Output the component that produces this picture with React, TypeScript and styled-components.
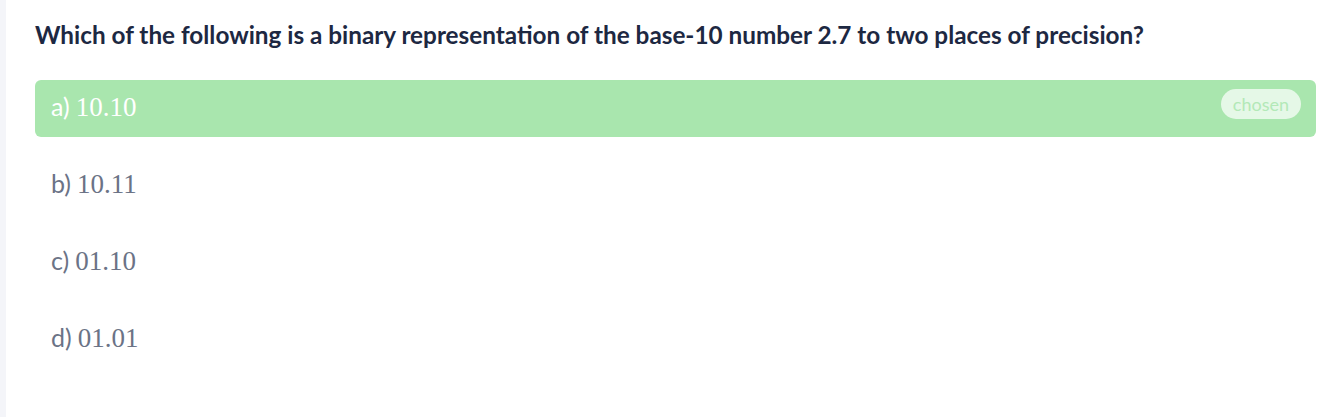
import React from "react";
import styled, { createGlobalStyle } from "styled-components";

const Global = createGlobalStyle`
  html, body { margin: 0; padding: 0; background: #ffffff; }
  body { font-family: "Lato", "Open Sans", sans-serif; }
`;

const Page = styled.div`
  display: flex;
  min-height: 417px;
`;

const SideStrip = styled.div`
  width: 6px;
  flex: none;
  background: #f4f5f9;
`;

const Main = styled.div`
  flex: 1;
  padding: 18px 18px 0 29px;
`;

const Question = styled.h1`
  margin: 0 0 28px 0;
  font-family: "Lato", sans-serif;
  font-weight: 700;
  font-size: 24.3px;
  line-height: 34px;
  color: #1d2842;
`;

const Options = styled.div`
  display: flex;
  flex-direction: column;
  gap: 20px;
`;

const Option = styled.div<{ $chosen?: boolean }>`
  display: flex;
  align-items: center;
  justify-content: space-between;
  height: 57px;
  box-sizing: border-box;
  padding: 0 15px 3px 16px;
  border-radius: 6px;
  background: ${(p) => (p.$chosen ? "#a9e6ae" : "transparent")};
  color: ${(p) => (p.$chosen ? "#ffffff" : "#6b7386")};
`;

const OptionText = styled.div`
  display: flex;
  align-items: baseline;
  gap: 6px;
`;

const Letter = styled.span`
  font-family: "Lato", sans-serif;
  font-size: 25px;
`;

const Value = styled.span`
  font-family: "Liberation Serif", serif;
  font-size: 27px;
`;

const Badge = styled.span`
  font-family: "Lato", sans-serif;
  font-size: 18px;
  line-height: 30px;
  padding: 0 12px;
  margin-bottom: 6px;
  border-radius: 15px;
  background: rgba(255, 255, 255, 0.7);
  color: #b3e9b7;
`;

const options = [
  { letter: "a)", value: "10.10", chosen: true },
  { letter: "b)", value: "10.11" },
  { letter: "c)", value: "01.10" },
  { letter: "d)", value: "01.01" },
];

export default function App() {
  return (
    <>
      <Global />
      <Page>
        <SideStrip />
        <Main>
          <Question>
            Which of the following is a binary representation of the base-10 number 2.7 to two places of precision?
          </Question>
          <Options>
            {options.map((o) => (
              <Option key={o.letter} $chosen={o.chosen}>
                <OptionText>
                  <Letter>{o.letter}</Letter>
                  <Value>{o.value}</Value>
                </OptionText>
                {o.chosen && <Badge>chosen</Badge>}
              </Option>
            ))}
          </Options>
        </Main>
      </Page>
    </>
  );
}
